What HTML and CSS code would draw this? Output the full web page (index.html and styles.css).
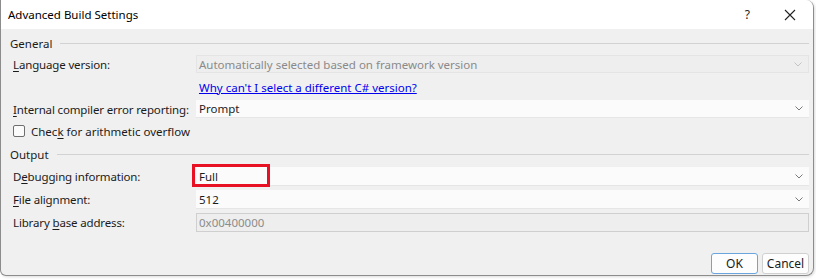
FILE: index.html
```html
<!DOCTYPE html>
<html>
<head>
<meta charset="utf-8">
<link rel="stylesheet" href="styles.css">
</head>
<body>
<div class="window">
  <div class="titlebar">
    <span class="title">Advanced Build Settings</span>
    <span class="help">?</span>
    <svg class="close" width="12" height="12" viewBox="0 0 12 12"><path d="M1 1 L11 11 M11 1 L1 11" stroke="#222" stroke-width="1.1" fill="none"/></svg>
  </div>
  <div class="content">
    <div class="group-header"><span>General</span><div class="rule"></div></div>
    <div class="row first">
      <label class="lbl"><u>L</u>anguage version:</label>
      <div class="combo disabled"><span>Automatically selected based on framework version</span>
        <svg class="chev" width="8" height="5" viewBox="0 0 8 5"><path d="M0.5 0.5 L4 4 L7.5 0.5" stroke="#c4c4c4" fill="none"/></svg></div>
    </div>
    <div class="link-row"><a class="link">Why can't I select a different C# version?</a></div>
    <div class="row">
      <label class="lbl"><u>I</u>nternal compiler error reporting:</label>
      <div class="combo"><span>Prompt</span>
        <svg class="chev" width="8" height="5" viewBox="0 0 8 5"><path d="M0.5 0.5 L4 4 L7.5 0.5" stroke="#7a7a7a" fill="none"/></svg></div>
    </div>
    <div class="check-row"><span class="checkbox"></span><span>Chec<u>k</u> for arithmetic overflow</span></div>
    <div class="group-header"><span>Output</span><div class="rule"></div></div>
    <div class="row out">
      <label class="lbl">D<u>e</u>bugging information:</label>
      <div class="combo"><span>Full</span>
        <svg class="chev" width="8" height="5" viewBox="0 0 8 5"><path d="M0.5 0.5 L4 4 L7.5 0.5" stroke="#7a7a7a" fill="none"/></svg>
        <div class="highlight"></div></div>
    </div>
    <div class="row out">
      <label class="lbl"><u>F</u>ile alignment:</label>
      <div class="combo"><span>512</span>
        <svg class="chev" width="8" height="5" viewBox="0 0 8 5"><path d="M0.5 0.5 L4 4 L7.5 0.5" stroke="#7a7a7a" fill="none"/></svg></div>
    </div>
    <div class="row out">
      <label class="lbl">Library <u>b</u>ase address:</label>
      <div class="textbox">0x00400000</div>
    </div>
    <div class="buttons">
      <button class="btn default">OK</button>
      <button class="btn">Cancel</button>
    </div>
  </div>
</div>
</body>
</html>
```
FILE: styles.css
```css
* { box-sizing: border-box; }
html, body { margin: 0; padding: 0; background: #ffffff; }
body {
  width: 816px; height: 280px; overflow: hidden;
  font-family: "Noto Sans", "Liberation Sans", sans-serif;
  font-size: 11.5px; color: #1b1b1b;
  white-space: nowrap;
}
.window {
  width: 814px; height: 276px;
  border: 1px solid #8c8c8c;
  border-top: none;
  border-radius: 0 8px 8px 6px;
  background: #f0f0f0;
  overflow: hidden;
  box-shadow: 1px 1px 3px rgba(0,0,0,0.15);
}
.titlebar {
  height: 29px; background: #ffffff;
  display: flex; align-items: center;
  padding: 0 0 0 7px;
}
.title { flex: 1; font-size: 11.5px; color: #000; }
.help { font-size: 12px; color: #222; margin-right: 34px; }
.close { margin-right: 17px; }
.content { padding: 0 4px 0 9px; }
.group-header {
  display: flex; align-items: center; gap: 8px;
  height: 16px; margin-top: 6px;
}
.rule { flex: 1; border-top: 1px solid #d2d2d2; margin-top: 1px; }
.row {
  display: flex; align-items: center;
  height: 18px; margin-top: 5px;
}
.row.first { margin-top: 4px; }
.row.out { height: 19px; margin-top: 4px; }
.group-header + .row.out { margin-top: 5px; }
.lbl { width: 186px; padding-left: 3px; flex: none; letter-spacing: -0.15px; }
.combo, .textbox {
  flex: 1; height: 100%;
  display: flex; align-items: center;
  padding-left: 3px;
  background: #fbfbfb;
  border-bottom: 1px solid #e6e6e6;
  position: relative;
}
.combo span { flex: 1; }
.combo.disabled { background: #eeeeee; border: 1px solid #e4e4e4; color: #8a8a8a; padding-left: 2px; }
.chev { margin-right: 6px; }
.textbox { background: #eeeeee; border: 1px solid #cfcfcf; color: #8c8c8c; padding-left: 2px; }
.link-row { height: 16px; margin-top: 6px; margin-bottom: 5px; padding-left: 189px; display: flex; align-items: center; }
.link { color: #0000ee; text-decoration: underline; }
.check-row {
  display: flex; align-items: center; gap: 6px;
  height: 18px; margin-top: 4px; padding-left: 3px;
}
.checkbox {
  width: 12px; height: 12px; border: 1px solid #6e6e6e; border-radius: 2px; background: #fbfbfb;
}
.highlight {
  position: absolute; left: -4px; top: -3px; width: 78px; height: 23px;
  border: 3px solid #e81123;
}
.buttons {
  display: flex; justify-content: flex-end; gap: 4px;
  margin-top: 21px; padding-right: 0px;
}
.btn {
  width: 47px; height: 21px;
  font-family: inherit; font-size: 12px; color: #1b1b1b;
  background: #fdfdfd; border: 1px solid #d0d0d0; border-radius: 3px;
  padding: 0;
}
.btn.default { border-color: #6aa6dd; }
u { text-decoration: underline; text-underline-offset: 2px; }
```
